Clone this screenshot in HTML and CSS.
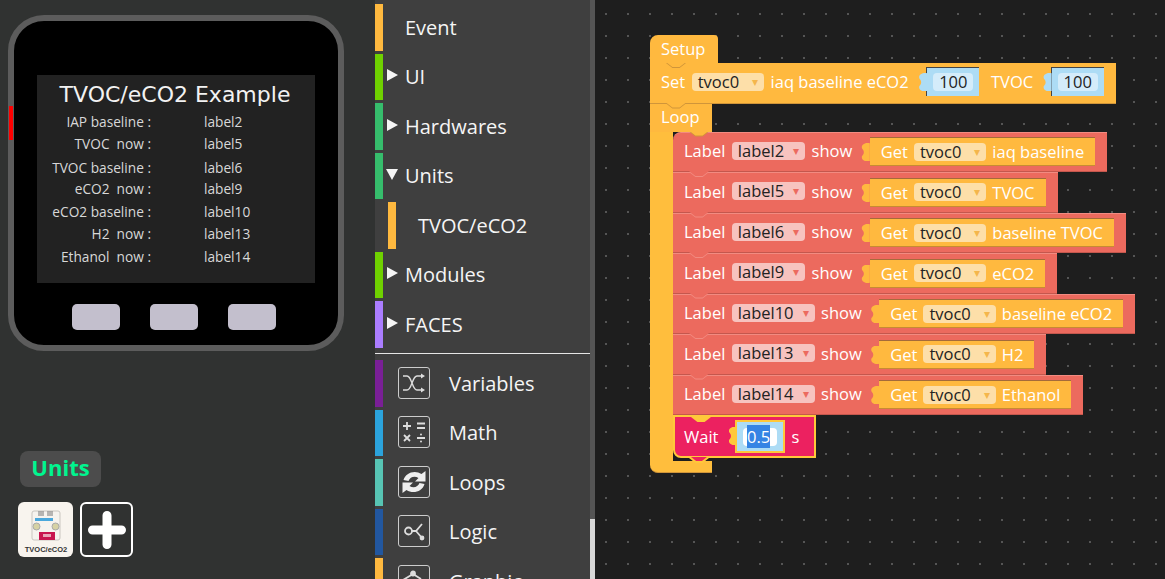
FILE: index.html
```html
<!DOCTYPE html>
<html lang="en">
<head>
    <meta charset="UTF-8">
    <meta name="viewport" content="width=device-width, initial-scale=1.0">
    <title>TVOC/eCO2 Example</title>
    <link rel="stylesheet" href="styles.css">
</head>
<body>
    <div class="app">
        <section class="preview">
            <div class="device">
                <span class="side-key"></span>
                <div class="screen">
                    <div class="screen-title">TVOC/eCO2 Example</div>
                    <div class="screen-grid">
                        <span>IAP baseline :</span><span>label2</span>
                        <span>TVOC&nbsp; now :</span><span>label5</span>
                        <span>TVOC baseline :</span><span>label6</span>
                        <span>eCO2&nbsp; now :</span><span>label9</span>
                        <span>eCO2 baseline :</span><span>label10</span>
                        <span>H2&nbsp; now :</span><span>label13</span>
                        <span>Ethanol&nbsp; now :</span><span>label14</span>
                    </div>
                </div>
                <div class="device-keys"><span></span><span></span><span></span></div>
            </div>
            <div class="units-panel">
                <div class="units-tag">Units</div>
                <div class="units-tiles">
                    <div class="tile tile-unit">
                        <svg width="55" height="55" viewBox="0 0 55 55">
                            <rect x="14" y="9" width="28" height="29" rx="2" fill="#f6f3ee" stroke="#c9c6c0"/>
                            <path d="M21 9v5M23 9v5M25 9v5M30 9v5M32 9v5M34 9v5" stroke="#777" stroke-width="1"/>
                            <rect x="17" y="16" width="18" height="3" fill="#4aa8dc"/>
                            <circle cx="18.500" cy="24.500" r="3.500" fill="#d6d2a4" stroke="#aaa"/>
                            <circle cx="37.500" cy="24.500" r="3.500" fill="#d6d2a4" stroke="#aaa"/>
                            <rect x="21" y="30" width="16" height="8" fill="#c8164f"/>
                            <rect x="25" y="32" width="8" height="3" fill="#e9a6b8"/>
                            <text x="28" y="50" class="tile-text" text-anchor="middle">TVOC/eCO2</text>
                        </svg>
                    </div>
                    <div class="tile tile-add">
                        <svg width="40" height="40" viewBox="0 0 40 40">
                            <path d="M20 5.500v29M5.500 20h29" stroke="#fff" stroke-width="9" stroke-linecap="round"/>
                        </svg>
                    </div>
                </div>
            </div>
        </section>

        <nav class="toolbox">
            <div class="cat"><i class="bar c-orange"></i><span class="cat-name">Event</span></div>
            <div class="cat"><i class="bar c-lime"></i><b class="caret"></b><span class="cat-name">UI</span></div>
            <div class="cat"><i class="bar c-green"></i><b class="caret"></b><span class="cat-name">Hardwares</span></div>
            <div class="cat"><i class="bar c-green"></i><b class="caret open"></b><span class="cat-name">Units</span></div>
            <div class="cat cat-sub"><i class="bar c-orange"></i><span class="cat-name">TVOC/eCO2</span></div>
            <div class="cat"><i class="bar c-lime"></i><b class="caret"></b><span class="cat-name">Modules</span></div>
            <div class="cat"><i class="bar c-purple"></i><b class="caret"></b><span class="cat-name">FACES</span></div>
            <hr class="cat-sep">
            <div class="cat cat-icon"><i class="bar c-violet"></i>
                <span class="cat-ico"><svg width="30" height="30" viewBox="0 0 30 30" fill="none" stroke="#ddd" stroke-width="1.400">
                    <path d="M4 8h4c5 0 5 14 10 14h6M4 22h4c5 0 5-14 10-14h6"/>
                    <path d="M22 5.500l4 2.500-4 2.500zM22 19.500l4 2.500-4 2.500z" fill="#ddd" stroke="none"/>
                </svg></span>
                <span class="cat-name">Variables</span></div>
            <div class="cat cat-icon"><i class="bar c-blue"></i>
                <span class="cat-ico"><svg width="30" height="30" viewBox="0 0 30 30" fill="none" stroke="#ddd" stroke-width="1.800">
                    <path d="M4 9h8M8 5v8M18 6.500h8M18 11h8M5 18l6 6M11 18l-6 6M18 21h8"/>
                    <circle cx="22" cy="17.500" r="1" fill="#ddd" stroke="none"/>
                    <circle cx="22" cy="24.500" r="1" fill="#ddd" stroke="none"/>
                </svg></span>
                <span class="cat-name">Math</span></div>
            <div class="cat cat-icon"><i class="bar c-teal"></i>
                <span class="cat-ico"><svg width="30" height="30" viewBox="0 0 30 30" fill="#eee">
                    <path d="M4.500 13C6.500 5.500 16 2.500 22.500 7L26.500 4v10.500H16L19.500 11C15.500 8.500 11 10 9.500 14z"/>
                    <path d="M25.500 17C23.500 24.500 14 27.500 7.500 23L3.500 26V15.500H14L10.500 19C14.500 21.500 19 20 20.500 16z"/>
                </svg></span>
                <span class="cat-name">Loops</span></div>
            <div class="cat cat-icon"><i class="bar c-navy"></i>
                <span class="cat-ico"><svg width="30" height="30" viewBox="0 0 30 30" fill="none" stroke="#ddd" stroke-width="1.800">
                    <circle cx="9.500" cy="15" r="3.500"/>
                    <path d="M13 15h4l6-7M17 15l6 7"/>
                    <circle cx="23" cy="22" r="1.500" fill="#ddd"/>
                </svg></span>
                <span class="cat-name">Logic</span></div>
            <div class="cat cat-icon"><i class="bar c-orange"></i>
                <span class="cat-ico"><svg width="30" height="30" viewBox="0 0 30 30" fill="none" stroke="#ddd" stroke-width="1.800">
                    <path d="M4 14l10-6 8 5"/>
                    <circle cx="14" cy="7.500" r="2" fill="#ddd"/>
                </svg></span>
                <span class="cat-name">Graphic</span></div>
            <div class="toolbox-scroll"><span></span></div>
        </nav>

        <main class="workspace">
            <div class="block-stack">
                <div class="block orange hat">Setup</div>
                <div class="block orange notched">Set <span class="field orange-field">tvoc0<em>▾</em></span> iaq baseline eCO2
                    <span class="value"><span class="value-box">100</span></span> TVOC
                    <span class="value"><span class="value-box">100</span></span></div>
                <div class="block orange loop-head notched">Loop</div>
                <div class="loop-body">
                    <div class="block red notched first">Label <span class="field red-field">label2<em>▾</em></span> show
                        <span class="inner">Get <span class="field orange-field">tvoc0<em>▾</em></span> iaq baseline</span></div>
                    <div class="block red notched">Label <span class="field red-field">label5<em>▾</em></span> show
                        <span class="inner">Get <span class="field orange-field">tvoc0<em>▾</em></span> TVOC</span></div>
                    <div class="block red notched">Label <span class="field red-field">label6<em>▾</em></span> show
                        <span class="inner">Get <span class="field orange-field">tvoc0<em>▾</em></span> baseline TVOC</span></div>
                    <div class="block red notched">Label <span class="field red-field">label9<em>▾</em></span> show
                        <span class="inner">Get <span class="field orange-field">tvoc0<em>▾</em></span> eCO2</span></div>
                    <div class="block red notched">Label <span class="field red-field">label10<em>▾</em></span> show
                        <span class="inner">Get <span class="field orange-field">tvoc0<em>▾</em></span> baseline eCO2</span></div>
                    <div class="block red notched">Label <span class="field red-field">label13<em>▾</em></span> show
                        <span class="inner">Get <span class="field orange-field">tvoc0<em>▾</em></span> H2</span></div>
                    <div class="block red notched">Label <span class="field red-field">label14<em>▾</em></span> show
                        <span class="inner">Get <span class="field orange-field">tvoc0<em>▾</em></span> Ethanol</span></div>
                    <div class="block wait notched">Wait
                        <span class="value wait-value"><span class="value-box"><mark>0.5</mark></span></span> s</div>
                </div>
                <div class="loop-foot"></div>
            </div>
        </main>
    </div>
</body>
</html>
```

FILE: styles.css
```css
:root {
    --orange: #ffb93f;
    --orange-dark: #d0953a;
    --arm: #ffbe3d;
    --red: #ec6a5e;
    --red-dark: #c4574d;
    --red-light: #f28b81;
    --pink: #ec2160;
    --gold: #ffc83a;
    --sky: #addcf5;
}
html, body {
    margin: 0;
    height: 100%;
    overflow: hidden;
}
body {
    font-family: "Open Sans", "Noto Sans", sans-serif;
    background: #303231;
}
.app {
    display: flex;
    height: 579px;
}

/* device preview */
.preview {
    width: 375px;
    flex: none;
    padding: 15px 0 0 8px;
    box-sizing: border-box;
}
.device {
    position: relative;
    width: 336px;
    height: 336px;
    box-sizing: border-box;
    border: 6px solid #5c5c5c;
    border-radius: 36px;
    background: #000;
    padding: 54px 23px 0;
}
.side-key {
    position: absolute;
    left: -5px;
    top: 85px;
    width: 4px;
    height: 34px;
    background: #f00;
}
.screen {
    width: 278px;
    height: 208px;
    background: #222;
    box-sizing: border-box;
    padding: 6px 2px 0 0;
    color: #d8d8d8;
}
.screen-title {
    font-family: "DejaVu Sans", sans-serif;
    font-size: 22px;
    line-height: 28px;
    color: #f2f2f2;
    text-align: center;
}
.screen-grid {
    display: grid;
    grid-template-columns: 114px 1fr;
    column-gap: 53px;
    grid-template-rows: 22px 24px 21px 23px 22px 23px 22px;
    margin-top: 2px;
    font-size: 13.700px;
    line-height: 22px;
}
.screen-grid span:nth-child(odd) {
    text-align: right;
}
.device-keys {
    display: flex;
    gap: 30px;
    margin-top: 21px;
    padding-left: 35px;
}
.device-keys span {
    width: 48px;
    height: 26px;
    border-radius: 5px;
    background: #c3bfcd;
}
.units-panel {
    margin: 100px 0 0 10px;
}
.units-tag {
    width: 81px;
    height: 36px;
    margin-left: 2px;
    border-radius: 8px;
    background: #4c4c4c;
    color: #00f58f;
    font-size: 22px;
    font-weight: 700;
    line-height: 32px;
    text-align: center;
}
.units-tiles {
    display: flex;
    gap: 7px;
    margin-top: 15px;
}
.tile {
    width: 53px;
    height: 55px;
    box-sizing: border-box;
    border-radius: 6px;
    display: flex;
    align-items: center;
    justify-content: center;
}
.tile-unit {
    width: 55px;
    background: #f8f4ee;
}
.tile-text {
    font-family: "Liberation Sans", sans-serif;
    font-size: 7.500px;
    font-weight: 700;
    fill: #333;
}
.tile-add {
    border: 2px solid #fff;
}

/* toolbox */
.toolbox {
    position: relative;
    width: 220px;
    flex: none;
    overflow: hidden;
    background: #3f3f3f;
    padding-top: 4px;
    box-sizing: border-box;
    color: #f5f5f5;
}
.cat {
    display: flex;
    align-items: center;
    height: 46.500px;
    margin-bottom: 3px;
    font-size: 20px;
}
.bar {
    width: 8px;
    height: 100%;
    flex: none;
}
.caret {
    width: 0;
    height: 0;
    margin-left: 4px;
    margin-top: -3px;
    border-left: 11px solid #f5f5f5;
    border-top: 6.500px solid transparent;
    border-bottom: 6.500px solid transparent;
}
.caret.open {
    margin-left: 3px;
    border-left: 6.500px solid transparent;
    border-right: 6.500px solid transparent;
    border-top: 11px solid #f5f5f5;
    border-bottom: 0;
}
.cat-name {
    position: absolute;
    left: 30px;
}
.cat-sub .bar {
    margin-left: 13px;
}
.cat-sub .cat-name {
    left: 43px;
}
.cat-sep {
    margin: 5.500px 5px 6px 0;
    border: 0;
    border-top: 1px solid #e6e6e6;
}
.cat-icon .cat-name {
    left: 74px;
}
.cat-ico {
    display: flex;
    width: 30px;
    height: 30px;
    margin: -1px 0 0 15px;
    border: 1px solid #ccc;
    border-radius: 3px;
}
.toolbox-scroll {
    position: absolute;
    right: 0;
    top: 0;
    width: 5px;
    height: 100%;
    background: #555;
}
.toolbox-scroll span {
    position: absolute;
    left: 0;
    right: 0;
    top: 519px;
    bottom: 0;
    background: #d8d8d8;
}
.c-orange { background: #ffb93f; }
.c-lime { background: #6fd100; }
.c-green { background: #36bd6c; }
.c-purple { background: #ab7dff; }
.c-violet { background: #7a1f96; }
.c-blue { background: #2ba3dc; }
.c-teal { background: #57c4b3; }
.c-navy { background: #22579f; }

/* blocks */
.workspace {
    position: relative;
    flex: 1;
    background-color: #1e1e1e;
    background-image: radial-gradient(circle, #555 1px, transparent 1.200px);
    background-size: 22px 22px;
    background-position: 0 3px;
}
.block-stack {
    position: absolute;
    left: 55px;
    top: 35px;
    display: flex;
    flex-direction: column;
    align-items: flex-start;
}
.block {
    --tab-fill: var(--orange);
    --tab-edge: var(--orange-dark);
    position: relative;
    display: flex;
    align-items: center;
    gap: 6.500px;
    box-sizing: border-box;
    height: 40.500px;
    padding: 0 12px 2px 11px;
    font-size: 16.500px;
    white-space: nowrap;
    color: #fff;
}
.orange {
    background: var(--orange);
    border-bottom: 1px solid var(--orange-dark);
}
.red {
    --tab-fill: var(--red);
    --tab-edge: var(--red-light);
    background: var(--red);
    border-top: 1px solid var(--red-light);
    border-bottom: 1px solid var(--red-dark);
}
.hat {
    height: 28px;
    width: 68px;
    border-radius: 8px 4px 0 0;
    border-bottom: 0;
}
.loop-head {
    height: 28px;
    width: 62px;
    border-bottom: 0;
}
/* the tab of the block above, dipping into this one */
.notched::before,
.notched::after,
.loop-foot::before,
.loop-foot::after {
    content: "";
    position: absolute;
    left: 16px;
    width: 20px;
    height: 5px;
    clip-path: polygon(0 0, 100% 0, 68% 100%, 32% 100%);
}
.notched::before {
    z-index: 2;
    top: 0;
    background: var(--tab-edge);
}
.notched::after {
    z-index: 3;
    top: -1px;
    background: var(--tab-fill);
}
.block.first {
    --tab-fill: var(--orange);
    --tab-edge: var(--orange-dark);
    border-radius: 8px 0 0 0;
}
.red.notched::before {
    top: -1px;
}
.red.notched::after {
    top: -2px;
}
.loop-body {
    display: flex;
    flex-direction: column;
    align-items: flex-start;
    border-left: 23px solid var(--arm);
}
.field {
    display: inline-flex;
    align-items: center;
    justify-content: space-between;
    gap: 9px;
    height: 18px;
    padding: 0 6px 1px;
    box-sizing: border-box;
    border-radius: 4px;
    color: #222;
}
.field em {
    font-style: normal;
    font-size: 12px;
}
.orange-field {
    gap: 13px;
    background: #fddfa9;
}
.orange-field em {
    color: #f4b64c;
}
.red-field {
    background: #f7c3bf;
}
.red-field em {
    color: var(--red);
}
.value,
.inner {
    position: relative;
    display: inline-flex;
    align-items: center;
    box-sizing: border-box;
    height: 29px;
}
.value {
    margin: 0 5px 0 11px;
    padding: 0 6px;
    background: var(--sky);
    border-top: 1px solid #444;
    border-left: 1px solid #444;
}
.value:last-child {
    margin-right: 0;
}
.value::before,
.inner::before {
    content: "";
    position: absolute;
    left: -9px;
    top: 5px;
    width: 9px;
    height: 18px;
    background: var(--sky);
    clip-path: path("M9 0C5-1 1 1 1 4C1 6 3 6 3 9C3 12 1 12 1 14C1 17 5 19 9 18Z");
}
.value-box {
    display: flex;
    align-items: center;
    height: 18px;
    padding: 0 6px 1px;
    box-sizing: border-box;
    border-radius: 4px;
    background: #d4ecfa;
    color: #222;
}
.inner {
    gap: 6px;
    margin: 2px 0 0 11px;
    padding: 0 11px;
    background: var(--orange);
    border-top: 1px solid #a56b3a;
    border-bottom: 1px solid #c78c33;
    color: #fff;
}
.inner::before {
    background: var(--orange);
}
.wait {
    --tab-fill: var(--gold);
    --tab-edge: var(--gold);
    height: 43px;
    width: 143px;
    background: var(--pink);
    border: 2px solid var(--gold);
    border-radius: 0 0 0 8px;
    padding-left: 9px;
    padding-right: 0;
    padding-bottom: 0;
}
.wait-value {
    height: 33px;
    width: 50px;
    margin: 0 5px 0 10px;
    padding: 0 6px;
    border: 2px solid var(--gold);
}
.wait-value::before {
    top: 5px;
    background: var(--gold);
}
.wait-value .value-box {
    background: #fff;
    width: 34px;
    padding: 0 4px 1px;
}
mark {
    background: #3584e4;
    color: #fff;
}
.loop-foot {
    position: relative;
    width: 62px;
    height: 15px;
    background: linear-gradient(#1e1e1e, #1e1e1e) 23px 0 / 39px 3px no-repeat, var(--arm);
    border-radius: 0 0 0 8px;
    border-bottom: 1px solid var(--orange-dark);
    box-sizing: border-box;
}
.loop-foot::before {
    left: 39px;
    top: 0;
    background: var(--gold);
}
.loop-foot::after {
    left: 41px;
    top: -1px;
    width: 16px;
    height: 4px;
    background: var(--pink);
}
```
